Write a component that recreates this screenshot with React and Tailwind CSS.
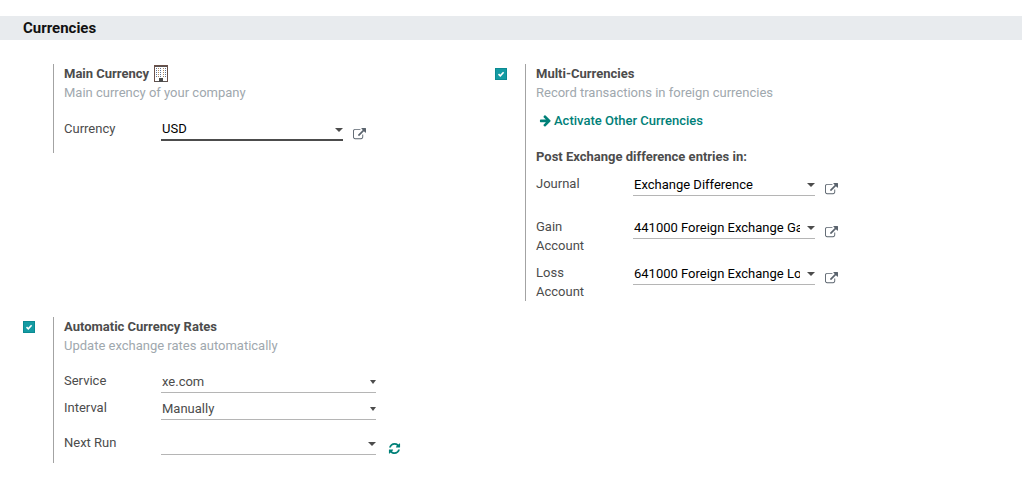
import { useState } from 'react'

const INPUT =
  'block h-[22px] w-full appearance-none rounded-none border-b bg-transparent pl-px pr-[15px] text-[13px] leading-5 outline-none'

export default function App() {
  const [multi, setMulti] = useState(true)
  const [autoRates, setAutoRates] = useState(true)

  return (
    <main className="bg-white pt-4 pb-5 font-[Roboto,sans-serif] text-[13px] leading-[19px] text-[#4c4c4c]">
      <h2 className="bg-[#e8ebee] px-[23px] text-[15px] leading-6 font-bold text-[#111]">Currencies</h2>

      <div className="mt-6 grid max-w-[944px] grid-cols-2 items-start gap-y-4">
        <Setting
          title="Main Currency"
          titleIcon={<BuildingIcon />}
          description="Main currency of your company"
        >
          <div className="mt-[17px] pb-3">
            <Field id="currency" label="Currency" action={<OpenRecord label="Open currency" />}>
              <Select id="currency" options={['USD', 'EUR', 'GBP']} className="border-b-2 border-[#4c4c4c] text-black" />
            </Field>
          </div>
        </Setting>

        <Setting
          id="multi"
          title="Multi-Currencies"
          description="Record transactions in foreign currencies"
          checked={multi}
          onChange={setMulti}
        >
          <a href="#currencies" className="mt-[9px] ml-[3px] flex items-center gap-[2px] font-medium text-[#008078]">
            <Icon path={ARROW_RIGHT} className="size-[13px]" />
            Activate Other Currencies
          </a>
          <p className="mt-[17px] font-bold">Post Exchange difference entries in:</p>
          <div className="mt-2">
            <Field id="journal" label="Journal" action={<OpenRecord label="Open journal" />}>
              <Select id="journal" options={['Exchange Difference']} className="border-[#b5b5b5] text-black" />
            </Field>
          </div>
          <div className="mt-[21px] space-y-2">
            <Field id="gain" label="Gain Account" action={<OpenRecord label="Open gain account" />}>
              <Select id="gain" options={['441000 Foreign Exchange Gain']} className="border-[#b5b5b5] text-black" />
            </Field>
            <Field id="loss" label="Loss Account" action={<OpenRecord label="Open loss account" />}>
              <Select id="loss" options={['641000 Foreign Exchange Loss']} className="border-[#b5b5b5] text-black" />
            </Field>
          </div>
        </Setting>

        <Setting
          id="auto"
          title="Automatic Currency Rates"
          description="Update exchange rates automatically"
          checked={autoRates}
          onChange={setAutoRates}
        >
          <div className="mt-4 pb-2">
            <Field id="service" label="Service" wide>
              <Select id="service" options={['xe.com', 'European Central Bank']} small className="border-[#b5b5b5]" />
            </Field>
            <div className="mt-[5px]">
              <Field id="interval" label="Interval" wide>
                <Select id="interval" options={['Manually', 'Daily', 'Weekly', 'Monthly']} small className="border-[#b5b5b5]" />
              </Field>
            </div>
            <div className="mt-[13px]">
              <Field
                id="next-run"
                label="Next Run"
                wide
                action={
                  <button type="button" aria-label="Update now" className="ml-3 mt-[9px] text-[#008078]">
                    <Icon path={REFRESH} className="size-[13px]" />
                  </button>
                }
              >
                <input id="next-run" type="text" className={`${INPUT} border-[#b5b5b5]`} />
                <Caret />
              </Field>
            </div>
          </div>
        </Setting>
      </div>
    </main>
  )
}

function Setting({ id, title, titleIcon, description, checked, onChange, children }) {
  return (
    <section className="flex">
      <div className="w-[53px] shrink-0 pt-1 pl-[23px]">
        {id && (
          <span className="relative block size-3">
            <input
              id={id}
              type="checkbox"
              checked={checked}
              onChange={(e) => onChange(e.target.checked)}
              className="block size-3 appearance-none border border-[#0b8a92] checked:bg-[#149ba3]"
            />
            {checked && (
              <svg viewBox="0 0 12 12" className="pointer-events-none absolute inset-0 size-3" aria-hidden="true">
                <path d="M3.5 6.2 5.3 7.8 8.6 4.3" fill="none" stroke="#fff" strokeWidth="1.6" />
              </svg>
            )}
          </span>
        )}
      </div>
      <div className="min-w-0 flex-1 border-l border-[#a3a3a3] pl-[10px]">
        <div className="flex h-[19px] items-center gap-[5px] font-bold">
          {id ? <label htmlFor={id}>{title}</label> : <h3>{title}</h3>}
          {titleIcon}
        </div>
        <p className="text-[#a0a8ae]">{description}</p>
        {children}
      </div>
    </section>
  )
}

function Field({ id, label, wide, action, children }) {
  return (
    <div className="flex items-start">
      <div className="w-[97px] shrink-0 pr-8">
        <label htmlFor={id} className="block">
          {wide ? <span className="whitespace-nowrap">{label}</span> : label}
        </label>
      </div>
      <div className={`relative ${wide ? 'w-[215px]' : 'w-[182px]'}`}>{children}</div>
      {action}
    </div>
  )
}

function Select({ id, options, small, className }) {
  return (
    <>
      <select id={id} className={`${INPUT} ${className}`}>
        {options.map((o) => (
          <option key={o}>{o}</option>
        ))}
      </select>
      <Caret small={small} />
    </>
  )
}

function Caret({ small }) {
  return (
    <svg
      viewBox="0 0 8 4"
      className={`pointer-events-none absolute right-0 top-[9px] h-1 ${small ? 'w-[6px]' : 'w-2'}`}
      preserveAspectRatio="none"
      aria-hidden="true"
    >
      <path d="M0 0h8L4 4z" fill="#4c4c4c" />
    </svg>
  )
}

function OpenRecord({ label }) {
  return (
    <button type="button" aria-label={label} className="ml-[10px] mt-[9px] text-[#5a636d]">
      <Icon path={EXTERNAL_LINK} className="size-[13px]" />
    </button>
  )
}

function Icon({ path, className }) {
  return (
    <svg viewBox="0 0 1792 1792" className={`${className} block`} fill="currentColor" aria-hidden="true">
      <path d={path} />
    </svg>
  )
}

function BuildingIcon() {
  return (
    <svg viewBox="0 0 14 17" className="h-[17px] w-[14px]" shapeRendering="crispEdges" aria-hidden="true">
      <path d="M.5.5h13v16H.5z" fill="#fff" stroke="#6b5149" />
      <path d="M1 1h12M1 16h12" stroke="#5a5352" strokeWidth="1" />
      {[3, 5, 7, 9, 11].map((y) =>
        [2, 4, 6, 9, 11].map((x) => (
          <rect key={`${x}-${y}`} x={x} y={y} width="1" height="1" fill={x === 4 || x === 9 ? '#b0895f' : '#5f7596'} />
        ))
      )}
      <path d="M5 13h4v4H5z" fill="#4c4c4c" />
    </svg>
  )
}

const EXTERNAL_LINK =
  'M1408 928v320q0 119-84.5 203.5t-203.5 84.5h-832q-119 0-203.5-84.5t-84.5-203.5v-832q0-119 84.5-203.5t203.5-84.5h704q14 0 23 9t9 23v64q0 14-9 23t-23 9h-704q-66 0-113 47t-47 113v832q0 66 47 113t113 47h832q66 0 113-47t47-113v-320q0-14 9-23t23-9h64q14 0 23 9t9 23zm384-864v512q0 26-19 45t-45 19-45-19l-176-176-652 652q-10 10-23 10t-23-10l-114-114q-10-10-10-23t10-23l652-652-176-176q-19-19-19-45t19-45 45-19h512q26 0 45 19t19 45z'

const REFRESH =
  'M1639 1056q0 5-1 7-64 268-268 434.5t-478 166.5q-146 0-282.5-55t-243.5-157l-129 129q-19 19-45 19t-45-19-19-45v-448q0-26 19-45t45-19h448q26 0 45 19t19 45-19 45l-137 137q71 66 161 102t187 36q134 0 250-65t186-179q11-17 53-117 8-23 30-23h192q13 0 22.5 9.5t9.5 22.5zm25-800v448q0 26-19 45t-45 19h-448q-26 0-45-19t-19-45 19-45l138-138q-148-137-349-137-134 0-250 65t-186 179q-11 17-53 117-8 23-30 23h-199q-13 0-22.5-9.5t-9.5-22.5v-7q65-268 270-434.5t480-166.5q146 0 284 55.5t245 156.5l130-129q19-19 45-19t45 19 19 45z'

const ARROW_RIGHT =
  'M1600 960q0 54-37 91l-651 651q-39 37-91 37-51 0-90-37l-75-75q-38-38-38-91t38-91l293-293h-704q-52 0-84.5-37.5t-32.5-90.5v-128q0-53 32.5-90.5t84.5-37.5h704l-293-294q-38-36-38-90t38-90l75-75q38-38 90-38 53 0 91 38l651 651q37 35 37 90z'
